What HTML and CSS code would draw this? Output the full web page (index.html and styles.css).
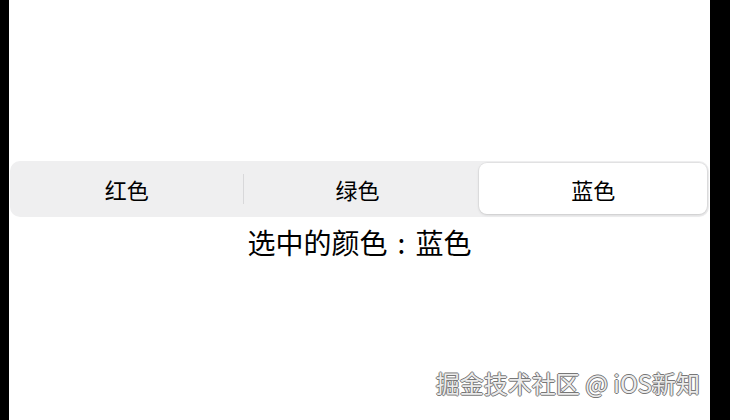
FILE: index.html
```html
<!DOCTYPE html>
<html lang="zh">
<head>
<meta charset="utf-8">
<link rel="stylesheet" href="styles.css">
</head>
<body>
<div class="frame">
  <div class="edge edge-left"></div>
  <main class="screen">
    <div class="segmented">
      <div class="segment">红色</div>
      <div class="divider"></div>
      <div class="segment">绿色</div>
      <div class="segment selected">蓝色</div>
    </div>
    <p class="result">选中的颜色<span class="colon">:</span>蓝色</p>
    <div class="watermark">掘金技术社区 @ iOS新知</div>
  </main>
  <div class="edge edge-right"></div>
</div>
</body>
</html>
```

FILE: styles.css
```css
html, body {
  margin: 0;
  padding: 0;
  background: #000;
}
body {
  font-family: "Noto Sans CJK SC", "Noto Sans", sans-serif;
  color: #000;
}
.frame {
  display: flex;
  width: 730px;
  height: 420px;
}
.edge {
  background: #000;
  flex: none;
}
.edge-left { width: 9px; }
.edge-right { width: 20px; }
.screen {
  position: relative;
  flex: 1;
  background: #fff;
  padding-top: 161px;
  box-sizing: border-box;
}
.segmented {
  margin: 0 1px;
  height: 56px;
  background: #efeff0;
  border-radius: 10px;
  display: flex;
  align-items: center;
  padding: 2px 2px 3px 3px;
  box-sizing: border-box;
}
.segment {
  flex: 1;
  height: 100%;
  display: flex;
  align-items: center;
  justify-content: center;
  font-size: 22px;
  border-radius: 8px;
  padding-right: 5px;
}
.divider {
  width: 1px;
  height: 30px;
  background: #d8d8da;
  flex: none;
  margin-left: -3px;
}
.segment.selected {
  background: #fff;
  box-shadow: 0 1px 3px rgba(0,0,0,0.12), 0 0 0 1px rgba(0,0,0,0.04);
  margin-left: 3px;
  padding-right: 0;
}
.result {
  margin: 7px 0 0;
  text-align: center;
  font-size: 28px;
  line-height: 36px;
}
.colon {
  margin: 0 10px;
}
.watermark {
  position: absolute;
  right: 10px;
  bottom: 20px;
  font-family: "Noto Sans CJK SC", sans-serif;
  font-size: 24px;
  color: #ececec;
  text-shadow: -1px 0 #777, 1px 0 #777, 0 -1px #777, 0 1px #777;
}
```
